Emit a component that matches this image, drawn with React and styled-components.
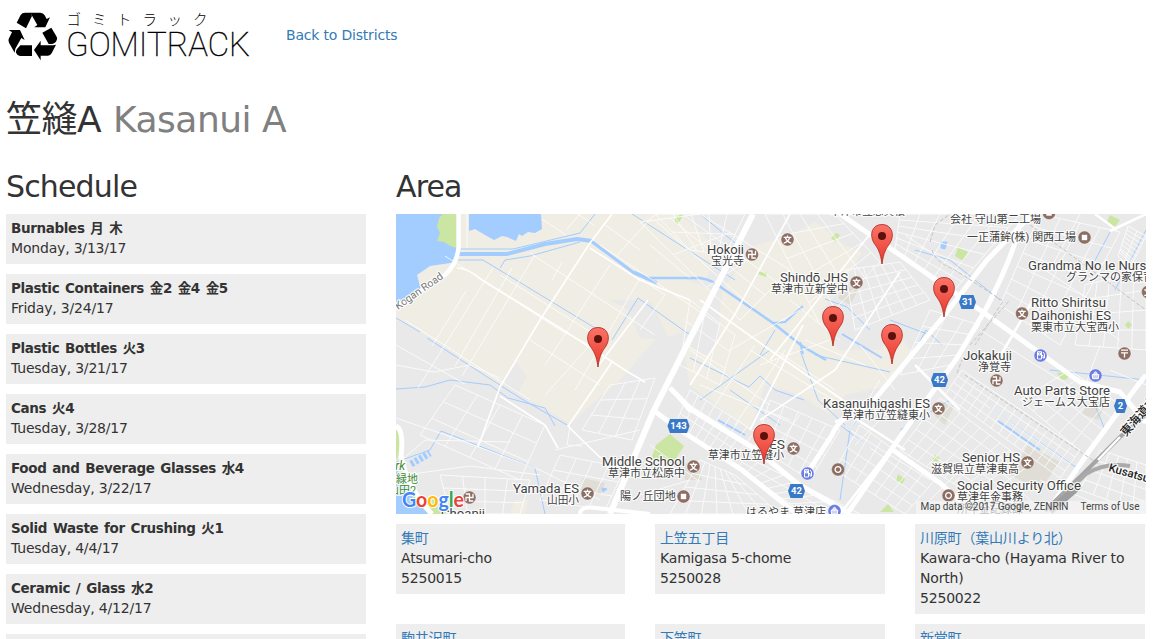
import React from 'react';
import styled, { createGlobalStyle } from 'styled-components';

const GlobalStyle = createGlobalStyle`
  * { box-sizing: border-box; }
  body {
    margin: 0;
    background: #fff;
    color: #333;
    font: 14px/20px 'DejaVu Sans', 'Noto Sans CJK JP', sans-serif;
    letter-spacing: -0.19px;
  }
`;

const Page = styled.div`
  width: 1154px;
  height: 639px;
  padding: 0 8px 0 6px;
  overflow: hidden;
`;

const Header = styled.header`
  display: flex;
  align-items: center;
  gap: 34px;
  height: 70px;
`;

const LogoArt = styled.svg`
  display: block;
  width: 246px;
  height: 70px;
  letter-spacing: 0;
`;

const Link = styled.a`
  color: #337ab7;
  text-decoration: none;
  white-space: nowrap;
`;

const Title = styled.h1`
  margin: 30px 0 0;
  font-size: 36px;
  font-weight: 400;
  line-height: 40px;
  letter-spacing: -0.5px;
  white-space: nowrap;
`;

const Muted = styled.span`
  margin-left: 1px;
  color: #808080;
`;

const Columns = styled.main`
  display: grid;
  grid-template-columns: 360px 750px;
  gap: 30px;
  margin-top: 30px;
`;

const Heading = styled.h2`
  margin: 0 0 11px;
  font-size: 30px;
  font-weight: 400;
  line-height: 33px;
  letter-spacing: -0.85px;
`;

const Schedule = styled.ul`
  display: grid;
  gap: 10px;
  margin: 0;
  padding: 0;
  list-style: none;
`;

const Pickup = styled.li`
  height: 50px;
  padding: 4px 5px 6px;
  background: #eee;
`;

const Category = styled.strong`
  display: block;
  height: 20px;
  font-size: 13.5px;
  letter-spacing: -0.35px;
  word-spacing: 1.4px;
  white-space: nowrap;
`;

const PickupDate = styled.div`
  height: 20px;
`;

const MapArt = styled.svg`
  display: block;
  width: 750px;
  height: 300px;
  letter-spacing: 0;
`;

const Towns = styled.div`
  display: grid;
  grid-template-columns: 229px 230px 230px;
  column-gap: 30px;
  align-items: start;
  grid-auto-rows: 90px;
  row-gap: 10px;
  margin-top: 10px;
`;

const Town = styled.div`
  padding: 4px 5px 6px;
  background: #eee;

  & > * { display: block; }
`;

const pickups = [
  ['Burnables 月 木', 'Monday, 3/13/17'],
  ['Plastic Containers 金2 金4 金5', 'Friday, 3/24/17'],
  ['Plastic Bottles 火3', 'Tuesday, 3/21/17'],
  ['Cans 火4', 'Tuesday, 3/28/17'],
  ['Food and Beverage Glasses 水4', 'Wednesday, 3/22/17'],
  ['Solid Waste for Crushing 火1', 'Tuesday, 4/4/17'],
  ['Ceramic / Glass 水2', 'Wednesday, 4/12/17'],
  ['', ''],
];

const towns = [
  ['集町', 'Atsumari-cho', '5250015'],
  ['上笠五丁目', 'Kamigasa 5-chome', '5250028'],
  ['川原町（葉山川より北）', 'Kawara-cho (Hayama River to North)', '5250022'],
  ['駒井沢町', '', ''],
  ['下笠町', '', ''],
  ['新堂町', '', ''],
];

function Logo() {
  return (
    <LogoArt viewBox="6 0 246 70">
      <g transform="scale(.3333)">
        <path d="M50 68 62 45Q66 38 75 38H92L96 48 78 85Z" />
        <path d="M91 38H121Q130 38 134 46L140 57 150 52 136 82H103L112 75Z" />
        <path d="M127 98 154 83 170 110Q173 115 170 121 166 131 156 132H146Z" />
        <path d="M168 134 155 160Q151 167 144 167H122V181L102 150 122 122V136H160Z" />
        <path d="M61 136H96V168H60Q51 166 48 158 47 152 51 147Z" />
        <path d="M26 90H60L74 120 64 114 46 146 44 158 27 128Q23 121 27 115L36 97Z" />
      </g>
      <text y="24.5" fontSize="14.500" fontWeight="300" fontFamily="'Noto Sans CJK JP', sans-serif" x="66.500 92 117 142.500 167.500 193">ゴミトラック</text>
      <text x="66" y="56" fontSize="34" fontWeight="100" fontFamily="Roboto, sans-serif" stroke="#000" strokeWidth=".45" textLength="184" lengthAdjust="spacingAndGlyphs">GOMITRACK</text>
    </LogoArt>
  );
}

// Evenly spaced streets filling a four-cornered block (corners run clockwise).
function StreetGrid({ corners: [a, b, c, d], across, down }) {
  const mix = (p, q, t) => `${(p[0] + (q[0] - p[0]) * t).toFixed(1)} ${(p[1] + (q[1] - p[1]) * t).toFixed(1)}`;
  const parts = [];
  for (let i = 0; i <= across; i += 1) parts.push(`M${mix(a, b, i / across)}L${mix(d, c, i / across)}`);
  for (let i = 0; i <= down; i += 1) parts.push(`M${mix(a, d, i / down)}L${mix(b, c, i / down)}`);
  return <path d={parts.join('')} />;
}

const grids = [
  { corners: [[640, 222], [700, 214], [790, 270], [740, 320]], across: 4, down: 3 },
  { corners: [[655, 214], [745, 214], [725, 255], [690, 250]], across: 5, down: 2 },
  { corners: [[765, 214], [835, 214], [880, 262], [820, 325]], across: 4, down: 5 },
  { corners: [[845, 270], [900, 262], [930, 300], [855, 330]], across: 6, down: 5 },
  { corners: [[900, 214], [1020, 214], [950, 295], [895, 250]], across: 6, down: 6 },
  { corners: [[1040, 214], [1120, 232], [1060, 345], [1000, 305]], across: 4, down: 7 },
  { corners: [[1128, 226], [1146, 236], [1130, 268], [1118, 256]], across: 2, down: 8 },
  { corners: [[1085, 285], [1146, 270], [1146, 350], [1075, 345]], across: 5, down: 4 },
  { corners: [[930, 310], [980, 325], [950, 365], [900, 375]], across: 3, down: 4 },
  { corners: [[962, 370], [1080, 450], [1060, 478], [945, 395]], across: 15, down: 4 },
  { corners: [[940, 398], [1030, 465], [980, 500], [900, 450]], across: 9, down: 5 },
  { corners: [[1070, 370], [1120, 405], [1085, 455], [1020, 400]], across: 5, down: 4 },
  { corners: [[860, 425], [935, 480], [905, 514], [835, 470]], across: 7, down: 4 },
  { corners: [[770, 400], [840, 430], [810, 480], [755, 445]], across: 5, down: 4 },
  { corners: [[690, 390], [755, 432], [730, 462], [675, 425]], across: 8, down: 3 },
  { corners: [[700, 460], [735, 475], [780, 514], [670, 514]], across: 7, down: 4 },
  { corners: [[745, 456], [860, 514], [805, 514], [738, 468]], across: 9, down: 2 },
  { corners: [[610, 385], [655, 378], [632, 440], [582, 430]], across: 3, down: 3 },
  { corners: [[455, 385], [545, 425], [520, 480], [420, 435]], across: 4, down: 3 },
  { corners: [[440, 475], [530, 480], [520, 514], [450, 514]], across: 4, down: 3 },
  { corners: [[560, 455], [625, 468], [605, 510], [540, 500]], across: 4, down: 3 },
  { corners: [[1100, 450], [1146, 465], [1146, 514], [1080, 490]], across: 5, down: 4 },
  { corners: [[690, 300], [735, 335], [720, 385], [680, 365]], across: 3, down: 3 },
];

function Streets() {
  return (
    <g fill="none" stroke="#fff" strokeLinejoin="round">
      <g strokeWidth="1" opacity=".8">
        {grids.map((g, i) => <StreetGrid key={i} {...g} />)}
        <path d="M467 214V248M542 219 566 235M580 214 566 230M655 214 617 255M578 214 595 226M604 224 640 250M466 291 432 346M493 268 418 388M512 268 455 366M535 255 462 376M562 262 552 280M610 265 545 365M640 278 575 390M590 345 545 395M445 256 560 330 600 350M405 320 530 400M396 345 465 384M500 275 600 338M530 253 655 335M600 245 720 325M650 245 690 278M640 278 665 295 640 330M530 340 600 385" />
        <path d="M396 418 460 440 540 470 600 500M396 465 425 440 510 442M405 475 470 466 540 475M640 430 555 450M570 426 567 445 582 446M396 365 434 372 470 365 500 378M730 350 800 310M690 350 770 405M700 385 790 420M750 350 850 410M760 365 830 340M715 405 755 345M735 425 785 350M775 350 835 390M790 300 840 340M805 340 865 365M860 345 895 390M880 380 850 430M690 480 640 495M650 445 700 482M800 415 770 455M900 400 855 445M850 430 930 480M1000 470 1035 505M960 470 925 505M1120 250 1146 275M1060 300 1120 340M1030 260 1090 300M980 330 1060 380M905 235 965 275M1080 214 1050 270M1110 370 1146 385M1100 345 1080 400M1040 480 1100 505" />
      </g>
      <path d="M457 268Q468 268 482 280L560 328 628 372 645 382M612 214 590 243 540 320 500 387 478 447M590 248 640 280 690 300M500 396 545 425 558 448M648 300 598 366M790 214 735 314 690 385M870 234 770 360M803 325 750 430M900 272 835 370 760 420M700 300 770 350M770 350 850 405M612 362 575 416 568 426 582 440 605 462" strokeWidth="1.700" />
      <path d="M1110 231 1146 214M1095 214 1117 230M835 422 850 415 905 450M890 450 840 514M670 388 690 412M1033 300 995 365M960 410 915 365" strokeWidth="2.5" />
      <path d="M753 214 654 410 610 514" strokeWidth="6" />
      <path d="M653 410 680 430 742 470 797 514M670 388 692 410 755 449 798 484 850 514M840 214 900 255 980 310 1080 382 1120 392 1146 423" strokeWidth="5" />
      <path d="M1030 216 987 260 943 317 920 345 870 405Q840 415 832 435L808 472" strokeWidth="5" />
      <path d="M1020 222Q1016 250 987 307L957 358 900 437 847 514M1146 375Q1132 392 1122 407L1090 450 1050 508M890 448 940 483 975 514" strokeWidth="5" />
      <path d="M580 514Q580 506 596 508L650 514" strokeWidth="4" />
      <path d="M458.500 214V248Q457 263 446 274L396 308" strokeWidth="4.500" />
      <path d="M396 426Q404 430 401 456 407 488 432 514" strokeWidth="5" />
    </g>
  );
}

function Water() {
  return (
    <g fill="none" stroke="#a3ccff">
      <path d="M396 214H457V262L430 266 417 275 421 290 396 303Z" fill="#a3ccff" stroke="none" />
      <path d="M469 214H541L542 229 535 233 528 232 522 236 519 234 516 241 507 237 502 236 494 240 485 235 475 229 469 231Z" fill="#a3ccff" stroke="none" />
      <path d="M396 470 410 480 428 514H396Z" fill="#a3ccff" stroke="none" />
      <path d="M452 254H507L545 244 577 239 592 241" strokeWidth="4" />
      <path d="M591 241 634 273 657 283" strokeWidth="3" />
      <path d="M634 272 648 278 700 278Q713 280 722 288L773 323 802 346 826 360" strokeWidth="2.500" />
      <path d="M800 342 803 354M773 323 785 322 803 306" strokeWidth="2" />
      <path d="M452 249 513 249 580 233 595 214M450 260 483 260 595 328M500 268 505 260 530 256 580 242M396 318 420 332M427 338 520 398 567 425M396 389 425 387 450 380 490 385 508 398 545 408 555 426M396 462 430 450 441 431 535 468 545 514M612 340 638 298 690 335M632 214 660 232 735 280M700 214 740 247M800 350 818 400 845 425M690 358 749 387 760 376 775 390 804 400M815 355 890 372M770 350 700 400M775 330 760 355M825 299 847 307 870 330M870 400 850 430 840 500M840 425 870 448M730 390 780 425M910 360 926 330 942 345M920 270 945 290M915 250 950 260 1000 300M1110 232 1090 270M1146 230 1115 290M1050 370 1146 380M1095 405 1105 430M890 320 930 335M990 408 1080 470M950 400 900 430" strokeWidth="1" />
      <path d="M998 421 1040 450M882 358 842 334M718 420 745 435" strokeWidth="2" />
      <path d="M411 464 430 453" strokeWidth="7" strokeDasharray="3 2" />
      <path d="M941 242 947 242 945 249 941 248ZM602 488 607 489 603 492Z" fill="#a3ccff" />
    </g>
  );
}

function Land() {
  return (
    <g>
      <rect x="396" y="214" width="750" height="300" fill="#e9e9e9" />
      <path d="M396 214H655L662 236 640 254 665 270 712 290 690 330 655 340 620 380 592 404 570 424 518 393 527 377 517 363 500 387 440 343 396 320Z" fill="#f0ede4" />
      <path d="M680 214 720 250 706 278 650 276 628 252 630 214Z" fill="#f0ede4" />
      <path d="M722 290 756 245 790 236 815 222 845 245 862 252 840 290 820 312 838 350 898 350 890 385 845 395 830 415 800 395 765 385 750 430 690 385 700 365 718 340Z" fill="#f0ede4" />
      <path d="M895 330 914 354 880 390 865 370ZM515 500 528 500 525 514 510 514Z" fill="#f0ede4" />
      <path d="M610 300 650 300 670 340 640 338 628 310ZM405 335 420 332 433 345 410 348Z" fill="#e9e9e9" />
      <path d="M683 345 700 352 728 362 722 398 690 385Z" fill="#f0ede4" />
      <path d="M583 478 605 483 600 495 580 492ZM1028 445 1060 462 1040 490 1010 475ZM1090 398 1105 405 1098 420 1082 414ZM680 462 700 466 702 480 685 480ZM943 402 954 406 945 425 935 416ZM845 285 858 290 850 305 838 298Z" fill="#dfddd6" />
    </g>
  );
}

function Parks() {
  return (
    <g fill="#cbe6a3">
      <path d="M443 214H456.500V248L450 246 444 242 437 241 440 233 437 227 439 218Z" />
      <path d="M396 430Q402 430 399 455L396 460ZM411 496 440 500 446 514H428Z" />
      <path d="M656 445 670 434 684 446 673 463 651 459ZM675 218 681 214 683 216 678 224 675 222ZM831 238 836 233 840 235 835 242ZM758 271 767 273 766 277 758 274Z" />
      <path d="M958 247 968 252 963 261 955 256ZM1110 215 1120 220 1114 228 1106 224ZM1128 321 1132 325 1128 329 1125 325ZM1057 373 1072 372 1066 380 1061 379Z" />
      <path d="M935 455 940 458 937 462 932 460ZM898 474 905 479 902 484 896 481ZM897 479 905 477ZM880 512 888 504 894 512ZM898 478 900 480Z" />
    </g>
  );
}

function Railways() {
  return (
    <g fill="none">
      <path d="M965 375 1100 465M970 345 1010 300M957 373 962 360M930 242 935 225 950 214M932 250Q935 262 955 270L1003 301 975 345M1030 225 1146 310" stroke="#c4c4c4" strokeDasharray="4 2" />
      <path d="M1146 415 1120 437 1083 474 1045 511" stroke="#a5a5a5" strokeWidth="4" />
      <path d="M1120 437 1098 460" stroke="#fff" strokeWidth="2.500" />
      <path d="M1130 466Q1105 462 1086 474L1050 508" stroke="#aaa" strokeWidth="4" />
      <path d="M1080 485 1050 511" stroke="#9d9d9d" strokeWidth="7" />
    </g>
  );
}

function Pin({ x, y }) {
  return (
    <g transform={`translate(${x} ${y})`}>
      <path d="M0 0C-1.500-12-4.500-16-8-21-13-29-10-39.500 0-39.500S13-29 8-21C4.500-16 1.500-12 0 0Z" fill="url(#pinFill)" stroke="#b3322a" strokeWidth=".9" />
      <circle cy="-28" r="4" fill="#5b120d" />
    </g>
  );
}

const glyphs = {
  school: <path d="M0-4V-2.300M-3.800-2.200H3.800M-2.200-2Q-.5 2.600 3.800 3.600M2.200-2Q.5 2.600-3.800 3.600" fill="none" stroke="#fff" strokeWidth="1.300" />,
  temple: <path d="M-3.800-3.500H0V3.500H3.800M-3.500 3.800V0H3.500V-3.800" fill="none" stroke="#fff" strokeWidth="1.300" />,
  building: <rect x="-2.700" y="-2.700" width="5.400" height="5.400" fill="#fff" />,
  office: <circle r="2.900" fill="none" stroke="#fff" strokeWidth="1.300" />,
  post: <path d="M-3.500-3.300H3.500M-3.500-.6H3.500M0-.6V4" fill="none" stroke="#fff" strokeWidth="1.300" />,
  fuel: <path d="M-3-3.800H1V3.500H-3ZM1 0H2.500V2.500H4V-1.500L2.500-3.500M-2-2.500V-.5H0V-2.500Z" fill="none" stroke="#fff" strokeWidth="1" />,
  shop: <path d="M-3.300-.9H3.300L2.800 3.200H-2.800ZM-1.700-1Q-1.500-3.700 0-3.700T1.700-1" fill="#ffffffaa" stroke="#fff" />,
};

function Poi({ x, y, kind }) {
  const fill = kind === 'fuel' || kind === 'shop' ? '#6b7de3' : '#8d6e63';
  return (
    <g transform={`translate(${x} ${y})`}>
      <circle r="6.500" fill={fill} stroke="#ffffff90" strokeWidth=".6" />
      {glyphs[kind]}
    </g>
  );
}

function Shield({ x, y, label }) {
  const w = label.length === 3 ? 11 : label.length === 2 ? 8.5 : 6.5;
  return (
    <g transform={`translate(${x} ${y})`}>
      <path d={`M${-w + 2.5}-7H${w - 2.5}L${w} 0 ${w - 2.5} 7H${-w + 2.5}L${-w} 0Z`} fill="#3a78c8" />
      <text y="3.400" textAnchor="middle" fontSize="9.500" fontWeight="700" fill="#fff" fontFamily="Roboto, sans-serif">{label}</text>
    </g>
  );
}

const pins = [[882, 264], [944, 317], [833, 346], [598, 367], [892, 364], [764, 464]];

const pois = [
  [752, 254.500, 'temple'], [787.500, 239.500, 'school'], [856.500, 282.500, 'school'],
  [1049, 213, 'building'], [1084.500, 237.500, 'building'], [1148, 292, 'school'],
  [1022, 313.500, 'school'], [1040.500, 355.500, 'fuel'], [1124.500, 353.500, 'post'],
  [1095.500, 375.500, 'shop'], [996.500, 380.500, 'temple'], [938.500, 408.500, 'school'],
  [1027.500, 462.500, 'school'], [948.500, 495.500, 'office'], [793.500, 448.500, 'school'],
  [807.500, 473.500, 'fuel'], [838, 469.500, 'office'], [834.500, 511, 'shop'],
  [693.500, 466.500, 'school'], [683.500, 496.500, 'building'], [587.500, 493.500, 'school'],
  [469.500, 497.500, 'temple'],
];

// x, baseline, text, drawn width, font size
const labels = [
  [707, 253.500, 'Hokoji', 37, 13], [711, 265, '宝光寺', 33, 11],
  [780, 281.500, 'Shindō JHS', 68, 13], [771, 293, '草津市立新堂中', 77, 11],
  [830, 215, '草津市立志賀根', 75, 11],
  [950, 223, '会社 守山第二工場', 91, 11], [967, 241, '一正蒲鉾(株) 関西工場', 109, 11],
  [1028, 269.500, 'Grandma No Ie Nursery', 136, 13], [1066, 281, 'グランマの家保育園', 99, 11],
  [1031, 306.500, 'Ritto Shiritsu', 75, 13], [1031, 319.500, 'Daihonishi ES', 80, 13], [1031, 331, '栗東市立大宝西小', 88, 11],
  [963, 359.500, 'Jokakuji', 49, 13], [978, 371, '浄覚寺', 33, 11],
  [1014, 395, 'Auto Parts Store', 96, 13], [1022, 406, 'ジェームス大宝店', 88, 11],
  [823, 407.500, 'Kasanuihigashi ES', 107, 13], [842, 419, '草津市立笠縫東小', 88, 11],
  [962, 461.500, 'Senior HS', 58, 13], [931, 473, '滋賀県立草津東高', 88, 11],
  [957, 490, 'Social Security Office', 124, 13], [957, 501, '草津年金事務', 66, 11],
  [957, 513, '所年金記録課', 66, 11],
  [769, 448.500, 'ES', 16, 13], [708, 459, '草津市立笠縫小', 76, 11],
  [602, 465.500, 'Middle School', 83, 13], [608, 477, '草津市立松原中', 77, 11],
  [620, 500, '陽ノ丘団地', 56, 11],
  [513, 492.500, 'Yamada ES', 66, 13], [547, 504, '山田小', 32, 11],
  [441, 518, 'Choanji', 44, 13], [746, 516, 'はるやま 草津店', 80, 11],
];

function Labels() {
  return (
    <g fontFamily="Roboto, 'Noto Sans CJK JP', sans-serif" fill="#424242" stroke="#fff" strokeWidth="2.400" strokeOpacity=".85" strokeLinejoin="round" paintOrder="stroke">
      {labels.map(([x, y, text, width, size]) => (
        <text key={text} x={x} y={y} fontSize={size} textLength={width} lengthAdjust="spacingAndGlyphs">{text}</text>
      ))}
      <g fill="#3f8a2c">
        <text x="389" y="470" fontSize="12" fontStyle="italic">ark</text>
        <text x="396" y="483" fontSize="11">緑地</text>
        <text x="388" y="493.500" fontSize="11">山田2</text>
      </g>
      <text transform="translate(398 310) rotate(-35)" fontSize="10.500" fill="#777" textLength="56">Kogan Road</text>
      <text transform="translate(1126 437) rotate(-49)" fontSize="12" fontWeight="500" fill="#222">東海道本線</text>
      <text transform="translate(1108 471) rotate(16)" fontSize="11.500" fontWeight="500" fill="#222">Kusatsu</text>
    </g>
  );
}

const wordmark = [['G', '#4285f4'], ['o', '#ea4335'], ['o', '#fbbc05'], ['g', '#4285f4'], ['l', '#34a853'], ['e', '#ea4335']];

function AreaMap() {
  return (
    <MapArt viewBox="396 214 750 300">
      <defs>
        <linearGradient id="pinFill" x1="0" y1="0" x2="0" y2="1">
          <stop offset="0" stopColor="#fb7468" />
          <stop offset="1" stopColor="#e8372c" />
        </linearGradient>
      </defs>
      <Land />
      <Water />
      <Parks />
      <Streets />
      <Railways />
      {pois.map(([x, y, kind]) => <Poi key={`${x}-${y}`} x={x} y={y} kind={kind} />)}
      <Shield x={678.5} y={426} label="143" />
      <Shield x={796.5} y={491} label="42" />
      <Shield x={939.500} y={380} label="42" />
      <Shield x={967.500} y={302} label="31" />
      <Shield x={1120.500} y={406} label="2" />
      <Labels />
      {pins.map(([x, y]) => <Pin key={x} x={x} y={y} />)}
      <text x="402" y="507" fontSize="21" fontFamily="Lato, sans-serif" fontWeight="700" textLength="62" lengthAdjust="spacingAndGlyphs" stroke="#fff" strokeWidth="2" paintOrder="stroke">
        {wordmark.map(([letter, color], i) => <tspan key={i} fill={color}>{letter}</tspan>)}
      </text>
      <rect x="916" y="501" width="230" height="13" fill="#f5f5f5" opacity=".7" />
      <g fontFamily="Roboto, sans-serif" fontSize="10" fill="#444">
        <text x="920.500" y="510" textLength="148">Map data ©2017 Google, ZENRIN</text>
        <text x="1080.500" y="510" textLength="59">Terms of Use</text>
      </g>
    </MapArt>
  );
}

export default function App() {
  return (
    <Page>
      <GlobalStyle />
      <Header>
        <Logo />
        <Link href="#">Back to Districts</Link>
      </Header>
      <Title>笠縫A <Muted>Kasanui A</Muted></Title>
      <Columns>
        <section>
          <Heading>Schedule</Heading>
          <Schedule>
            {pickups.map(([name, date]) => (
              <Pickup key={name}>
                <Category>{name}</Category>
                <PickupDate>{date}</PickupDate>
              </Pickup>
            ))}
          </Schedule>
        </section>
        <section>
          <Heading>Area</Heading>
          <AreaMap />
          <Towns>
            {towns.map(([name, reading, code]) => (
              <Town key={name}>
                <Link href="#">{name}</Link>
                <span>{reading}</span>
                <span>{code}</span>
              </Town>
            ))}
          </Towns>
        </section>
      </Columns>
    </Page>
  );
}
